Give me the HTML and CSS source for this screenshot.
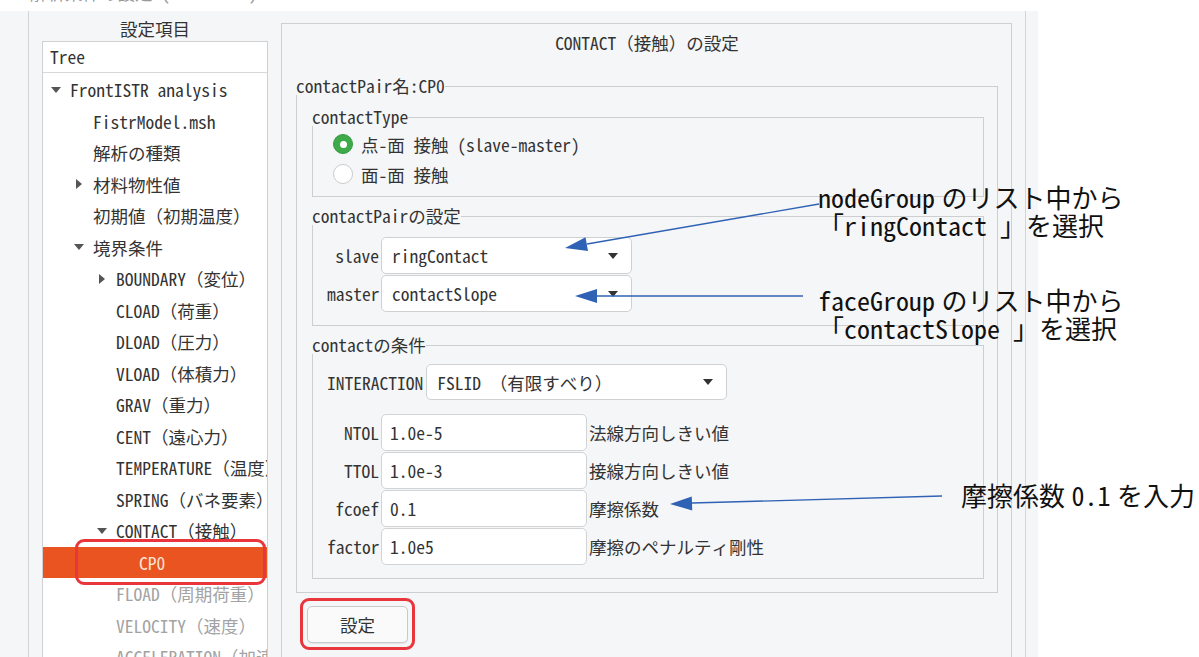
FILE: index.html
```html
<!DOCTYPE html>
<html lang="ja">
<head>
  <meta charset="UTF-8" />
  <title>CONTACT の設定</title>
  <link rel="stylesheet" href="styles.css">
</head>
<body>
  <div class="cut"><span>解析条件の設定 (FrontISTR)</span></div>
  <div class="app">
    <aside class="side">
      <div class="side-title">設定項目</div>
      <div class="tree">
        <div class="tree-head">Tree</div>
        <ul class="tree-list">
          <li class="l0"><i class="exp open"></i>FrontISTR analysis</li>
          <li class="l1"><i class="exp"></i>FistrModel.msh</li>
          <li class="l1"><i class="exp"></i>解析の種類</li>
          <li class="l1"><i class="exp closed"></i>材料物性値</li>
          <li class="l1"><i class="exp"></i>初期値（初期温度）</li>
          <li class="l1"><i class="exp open"></i>境界条件</li>
          <li class="l2"><i class="exp closed"></i>BOUNDARY（変位）</li>
          <li class="l2"><i class="exp"></i>CLOAD（荷重）</li>
          <li class="l2"><i class="exp"></i>DLOAD（圧力）</li>
          <li class="l2"><i class="exp"></i>VLOAD（体積力）</li>
          <li class="l2"><i class="exp"></i>GRAV（重力）</li>
          <li class="l2"><i class="exp"></i>CENT（遠心力）</li>
          <li class="l2"><i class="exp"></i>TEMPERATURE（温度）</li>
          <li class="l2"><i class="exp"></i>SPRING（バネ要素）</li>
          <li class="l2"><i class="exp open"></i>CONTACT（接触）</li>
          <li class="l3 sel"><i class="exp"></i>CP0<span class="mark mark-row"></span></li>
          <li class="l2 dim"><i class="exp"></i>FLOAD（周期荷重）</li>
          <li class="l2 dim"><i class="exp"></i>VELOCITY（速度）</li>
          <li class="l2 dim"><i class="exp"></i>ACCELERATION（加速度）</li>
        </ul>
      </div>
    </aside>

    <main class="main">
      <div class="main-title">CONTACT（接触）の設定</div>

      <section class="group">
        <div class="group-title"><span>contactPair名:CP0</span></div>
        <div class="group-body outer">

          <section class="group">
            <div class="group-title"><span>contactType</span></div>
            <div class="group-body types">
              <div class="radio"><span class="dot on"></span>点-面 接触 (slave-master)</div>
              <div class="radio"><span class="dot"></span>面-面 接触</div>
            </div>
          </section>

          <section class="group">
            <div class="group-title"><span>contactPairの設定</span></div>
            <div class="group-body pairs">
              <span class="lbl">slave</span>
              <div class="combo">ringContact</div>
              <span class="lbl">master</span>
              <div class="combo">contactSlope</div>
            </div>
          </section>

          <section class="group">
            <div class="group-title"><span>contactの条件</span></div>
            <div class="group-body cond">
              <div class="inter">
                <span>INTERACTION</span>
                <div class="combo wide">FSLID （有限すべり）</div>
              </div>
              <div class="fields">
                <span class="lbl">NTOL</span>
                <input class="field" value="1.0e-5">
                <span>法線方向しきい値</span>
                <span class="lbl">TTOL</span>
                <input class="field" value="1.0e-3">
                <span>接線方向しきい値</span>
                <span class="lbl">fcoef</span>
                <input class="field" value="0.1">
                <span>摩擦係数</span>
                <span class="lbl">factor</span>
                <input class="field" value="1.0e5">
                <span>摩擦のペナルティ剛性</span>
              </div>
            </div>
          </section>

        </div>
      </section>

      <div class="btn-row">
        <span class="btn-wrap"><button class="btn">設定</button><span class="mark mark-btn"></span></span>
      </div>
    </main>
    <div class="split"></div>
  </div>

  <div class="note note1">nodeGroup&#8197;のリスト中から<br>「ringContact 」を選択</div>
  <div class="note note2">faceGroup&#8197;のリスト中から<br>「contactSlope 」を選択</div>
  <div class="note note3">摩擦係数&#8197;0.1&#8197;を入力</div>

  <svg class="arrows" width="1199" height="657" viewBox="0 0 1199 657">
    <g stroke="#2f62b5" stroke-width="1.3" fill="none">
      <line x1="819" y1="204" x2="587" y2="244" />
      <line x1="803" y1="296" x2="597" y2="296" />
      <line x1="942" y1="496" x2="692" y2="503" />
    </g>
    <g fill="#2f62b5">
      <polygon points="565,248 588,251 585.5,237.3" />
      <polygon points="575,296 597,289 597,303" />
      <polygon points="670,504 692.2,510.4 691.8,496.4" />
    </g>
  </svg>
</body>
</html>
```

FILE: styles.css
```css
body { margin: 0; width: 1199px; height: 657px; overflow: hidden; position: relative; background: #fff; color: #333; font-family: "Noto Sans Mono CJK JP", "DejaVu Sans Mono", monospace; font-size: 17.5px; }
* { box-sizing: border-box; }

.cut { height: 11px; overflow: hidden; padding-left: 30px; color: #999; }
.cut span { display: block; line-height: 18px; margin-top: -16px; }

.app { display: flex; width: 1038px; height: 646px; background: #f5f6f7; overflow: hidden; }

/* left: tree */
.side { flex: none; width: 253px; margin-left: 28px; padding: 0 13px; border-left: 1px solid #d3d4d6; }
.side-title { height: 30px; padding-top: 6px; line-height: 24px; text-align: center; }
.tree { height: 620px; background: #fff; border: 1px solid #cfd0d2; overflow: hidden; }
.tree-head { height: 31px; line-height: 30px; padding-left: 7px; border-bottom: 1px solid #d7d8da; }
.tree-list { list-style: none; margin: 0; padding: 1px 0 0; }
.tree-list li { position: relative; display: flex; align-items: center; height: 31.5px; white-space: nowrap; }
.exp { flex: none; width: 20px; display: flex; align-items: center; }
.exp.open::before { content: ""; margin-left: 1px; border-left: 5px solid transparent; border-right: 5px solid transparent; border-top: 6px solid #555; }
.exp.closed::before { content: ""; margin-left: 3px; border-top: 5px solid transparent; border-bottom: 5px solid transparent; border-left: 6px solid #555; }
.l0 { padding-left: 7px; }
.l1 { padding-left: 30px; }
.l2 { padding-left: 53px; }
.l3 { padding-left: 76px; }
.sel { background: #e95420; color: #fde3d6; }
.dim { color: #a3a3a3; }

.mark { position: absolute; border: 3px solid #e8363c; border-radius: 9px; pointer-events: none; }
.mark-row { left: 32px; right: 1px; top: -8px; bottom: -7px; }
.mark-btn { left: -7px; right: -7px; top: -8px; bottom: -7px; }

/* right: settings */
.main { flex: none; width: 731px; height: 700px; margin-top: 12px; padding: 9px 13px 0 14px; border: 1px solid #cfd0d2; }
.main-title { line-height: 20px; margin-bottom: 24px; text-align: center; }
.split { flex: none; width: 1px; margin-left: 13px; background: #d3d4d6; }

.group-title { display: flex; height: 18px; line-height: 18px; white-space: nowrap; }
.group-title::after { content: ""; flex: 1; margin-top: 9px; border-top: 1px solid #cdcecf; border-right: 1px solid #cdcecf; }
.group-body { border: 1px solid #cdcecf; border-top: 0; }
.group + .group { margin-top: 10px; }

.outer { padding: 13px 13px 13px 15px; }
.types { padding: 3px 0 7px 20px; }
.radio { display: flex; align-items: center; gap: 8px; height: 30px; }
.dot { flex: none; width: 20px; height: 20px; border-radius: 50%; background: #fff; border: 1px solid #cacbcc; }
.dot.on { display: flex; align-items: center; justify-content: center; background: #3eaa4a; border-color: #379a42; }
.dot.on::after { content: ""; width: 7px; height: 7px; border-radius: 50%; background: #fff; }

.pairs { display: grid; grid-template-columns: 52px 251px; gap: 1px 2px; align-items: center; padding: 12px 0 13px 14px; }
.lbl { text-align: right; }
.combo { display: flex; align-items: center; justify-content: space-between; height: 37px; padding: 0 13px 0 10px; background: #fff; border: 1px solid #cfd0d2; border-radius: 5px; white-space: nowrap; }
.combo::after { content: ""; border-left: 5px solid transparent; border-right: 5px solid transparent; border-top: 6px solid #333; }
.combo.wide { width: 301px; height: 36px; }

.cond { padding: 10px 0 13px 14px; }
.inter { display: flex; align-items: center; gap: 3px; }
.fields { display: grid; grid-template-columns: 52px 206px auto; gap: 1px 2px; align-items: center; margin-top: 14px; }
.field { width: 206px; height: 37px; padding: 0 8px; font: inherit; color: inherit; background: #fff; border: 1px solid #d2d3d5; border-radius: 5px; }

.btn-row { margin-top: 13px; padding-left: 11px; }
.btn-wrap { position: relative; display: inline-block; }
.btn { display: block; width: 101px; height: 37px; font: inherit; color: #333; background: #fafafa; border: 1px solid #c8c9cb; border-radius: 5px; box-shadow: 0 1px 1px rgba(0,0,0,0.08); }

/* annotations */
.note { position: absolute; font-size: 26px; line-height: 28px; color: #111; white-space: nowrap; }
.note1 { left: 818px; top: 183px; }
.note2 { left: 818px; top: 286px; }
.note3 { left: 961px; top: 481px; }
.arrows { position: absolute; left: 0; top: 0; pointer-events: none; }
```
